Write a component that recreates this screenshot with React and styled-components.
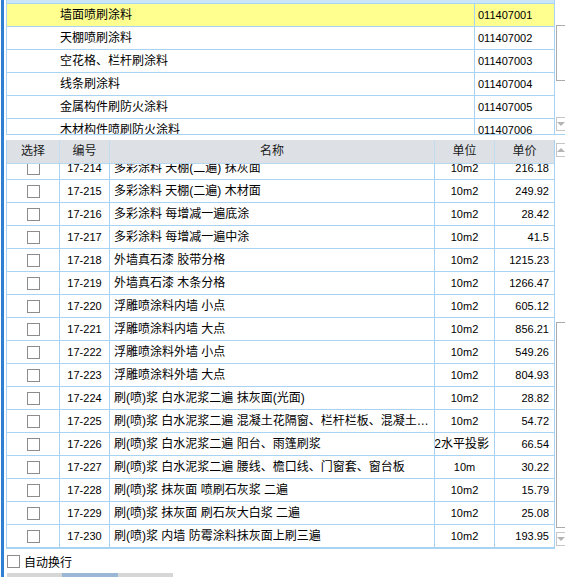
import React from "react";
import styled, { createGlobalStyle } from "styled-components";

const GlobalStyle = createGlobalStyle`
  html, body {
    margin: 0;
    padding: 0;
    background: #fff;
    overflow: hidden;
  }
`;

const LINE = "#a8d3f3";
const FONT = `"Liberation Sans", "Noto Sans CJK SC", sans-serif`;

const Frame = styled.div`
  display: flex;
  width: 565px;
  height: 577px;
  overflow: hidden;
  background: #fff;
  font-family: ${FONT};
  font-size: 12px;
  color: #000;
`;

const Edge = styled.div`
  flex: none;
  width: 3px;
  margin: 0 2px 0 1px;
  background: #2f80d3;
`;

const Main = styled.div`
  flex: 1;
  min-width: 0;
  display: flex;
  flex-direction: column;
`;

const Panel = styled.div`
  display: flex;
  flex: none;
  height: ${(p) => p.$h}px;
  margin-top: ${(p) => p.$top || 0}px;
`;

const Table = styled.div`
  flex: 1;
  min-width: 0;
  overflow: hidden;
  border-left: 1px solid ${LINE};
  border-right: 1px solid ${LINE};
  border-bottom: ${(p) => p.$bottom || 1}px solid ${LINE};
  display: flex;
  flex-direction: column;
`;

const TopBand = styled.div`
  flex: none;
  height: 3px;
  background: #cce6f9;
  border-bottom: 1px solid ${LINE};
`;

const ListRow = styled.div`
  flex: none;
  display: flex;
  height: 22px;
  line-height: 22px;
  border-bottom: 1px solid ${LINE};
  background: ${(p) => (p.$active ? "#ffff90" : "#fff")};
`;

const ListName = styled.div`
  width: 468px;
  flex: none;
  box-sizing: border-box;
  padding-left: 53px;
  border-right: 1px solid ${LINE};
  white-space: nowrap;
`;

const ListCode = styled.div`
  flex: 1;
  padding-left: 3px;
  font-size: 11px;
`;

const Grid = styled.div`
  flex: none;
  display: grid;
  grid-template-columns: 53px 50px 325px 60px 1fr;
  height: ${(p) => (p.$head ? 23 : 22)}px;
  line-height: ${(p) => (p.$head ? 23 : 22)}px;
  border-bottom: 1px solid ${(p) => (p.$head ? "#b9d7ee" : LINE)};
  background: ${(p) => (p.$head ? "#dde1e6" : "#fff")};
  margin-top: ${(p) => p.$shift || 0}px;
`;

const Cell = styled.div`
  box-sizing: border-box;
  min-width: 0;
  overflow: hidden;
  white-space: nowrap;
  border-right: ${(p) => (p.$last ? "none" : `1px solid ${LINE}`)};
  display: flex;
  align-items: center;
  justify-content: ${(p) =>
    p.$align === "right" ? "flex-end" : p.$align === "left" ? "flex-start" : "center"};
  padding: ${(p) => (p.$align === "right" ? "0 5px 0 0" : p.$align === "left" ? "0 0 0 4px" : "0")};
  font-size: ${(p) => (p.$num ? 11 : 12)}px;
`;

const HeadCell = styled(Cell)`
  border-right-color: #c4dcef;
  color: #1a1a1a;
`;

const Ellipsis = styled.span`
  display: block;
  min-width: 0;
  overflow: hidden;
  text-overflow: ellipsis;
  white-space: nowrap;
`;

const Box = styled.span`
  display: inline-block;
  flex: none;
  width: 13px;
  height: 13px;
  box-sizing: border-box;
  border: 1px solid #8c8c8c;
  background: #fff;
`;

const Body = styled.div`
  flex: 1;
  min-height: 0;
  overflow: hidden;
  display: flex;
  flex-direction: column;
`;

const ScrollTrack = styled.div`
  flex: none;
  width: 10px;
  display: flex;
  flex-direction: column;
  align-items: flex-end;
  background: #fff;
  border-bottom: 1px solid ${(p) => p.$line || "transparent"};
`;

const Thumb = styled.div`
  flex: none;
  width: 9px;
  height: ${(p) => p.$h}px;
  margin-top: ${(p) => p.$top || 0}px;
  box-sizing: border-box;
  border: 1px solid #ababab;
  border-right: none;
  background: #fff;
`;

const Arrow = styled.div`
  flex: none;
  width: 9px;
  height: 14px;
  box-sizing: border-box;
  border: 1px solid #c6c6c6;
  border-right: none;
  margin-top: ${(p) => p.$top || 0}px;
  margin-bottom: ${(p) => p.$bottom || 0}px;
  display: flex;
  align-items: center;
  justify-content: center;
  &::after {
    content: "";
    width: 0;
    height: 0;
    border-left: 4px solid transparent;
    border-right: 4px solid transparent;
    ${(p) => (p.$up ? "border-bottom" : "border-top")}: 4px solid #b4b4b4;
  }
`;

const Spacer = styled.div`
  flex: 1;
`;

const Footer = styled.div`
  flex: none;
  display: flex;
  align-items: center;
  gap: 4px;
  height: 22px;
  padding: 1px 0 0 1px;
  font-family: "Noto Sans CJK SC", sans-serif;
  font-size: 12px;
`;

const HScroll = styled.div`
  flex: none;
  width: 166px;
  height: 17px;
  margin: 1px 0 0 1px;
  background: #d6d6d6;
  display: flex;
`;

const HThumb = styled.div`
  width: 56px;
  margin-left: 55px;
  background: #9ab7d5;
`;

const topItems = [
  ["墙面喷刷涂料", "011407001"],
  ["天棚喷刷涂料", "011407002"],
  ["空花格、栏杆刷涂料", "011407003"],
  ["线条刷涂料", "011407004"],
  ["金属构件刷防火涂料", "011407005"],
  ["木材构件喷刷防火涂料", "011407006"],
];

const rows = [
  ["17-214", "多彩涂料 天棚(二遍) 抹灰面", "10m2", "216.18"],
  ["17-215", "多彩涂料 天棚(二遍) 木材面", "10m2", "249.92"],
  ["17-216", "多彩涂料 每增减一遍底涂", "10m2", "28.42"],
  ["17-217", "多彩涂料 每增减一遍中涂", "10m2", "41.5"],
  ["17-218", "外墙真石漆 胶带分格", "10m2", "1215.23"],
  ["17-219", "外墙真石漆 木条分格", "10m2", "1266.47"],
  ["17-220", "浮雕喷涂料内墙 小点", "10m2", "605.12"],
  ["17-221", "浮雕喷涂料内墙 大点", "10m2", "856.21"],
  ["17-222", "浮雕喷涂料外墙 小点", "10m2", "549.26"],
  ["17-223", "浮雕喷涂料外墙 大点", "10m2", "804.93"],
  ["17-224", "刷(喷)浆 白水泥浆二遍 抹灰面(光面)", "10m2", "28.82"],
  ["17-225", "刷(喷)浆 白水泥浆二遍 混凝土花隔窗、栏杆栏板、混凝土栏杆", "10m2", "54.72"],
  ["17-226", "刷(喷)浆 白水泥浆二遍 阳台、雨篷刷浆", "10m2水平投影", "66.54"],
  ["17-227", "刷(喷)浆 白水泥浆二遍 腰线、檐口线、门窗套、窗台板", "10m", "30.22"],
  ["17-228", "刷(喷)浆 抹灰面 喷刷石灰浆 二遍", "10m2", "15.79"],
  ["17-229", "刷(喷)浆 抹灰面 刷石灰大白浆 二遍", "10m2", "25.08"],
  ["17-230", "刷(喷)浆 内墙 防霉涂料抹灰面上刷三遍", "10m2", "193.95"],
];

const hasCjk = (s) => /[^\x00-\x7f]/.test(s);

export default function App() {
  return (
    <Frame>
      <GlobalStyle />
      <Edge />
      <Main>
        <Panel $h={135}>
          <Table>
            <TopBand />
            {topItems.map(([name, code], i) => (
              <ListRow key={code} $active={i === 0}>
                <ListName>{name}</ListName>
                <ListCode>{code}</ListCode>
              </ListRow>
            ))}
          </Table>
          <ScrollTrack $line={LINE}>
            <Thumb $top={25} $h={56} />
            <Spacer />
            <Arrow $bottom={3} />
          </ScrollTrack>
        </Panel>

        <Panel $h={409} $top={5}>
          <Table $bottom={2}>
            <Grid $head>
              <HeadCell>选择</HeadCell>
              <HeadCell>编号</HeadCell>
              <HeadCell>名称</HeadCell>
              <HeadCell>单位</HeadCell>
              <HeadCell $last>单价</HeadCell>
            </Grid>
            <Body>
              {rows.map(([code, name, unit, price], i) => (
                <Grid key={code} $shift={i === 0 ? -7 : 0}>
                  <Cell>
                    <Box />
                  </Cell>
                  <Cell $num>{code}</Cell>
                  <Cell $align="left">
                    <Ellipsis>{name}</Ellipsis>
                  </Cell>
                  <Cell $num={!hasCjk(unit)} $align={hasCjk(unit) ? "right" : undefined}>
                    {unit}
                  </Cell>
                  <Cell $num $align="right" $last>
                    {price}
                  </Cell>
                </Grid>
              ))}
            </Body>
          </Table>
          <ScrollTrack>
            <Arrow $up $top={3} />
            <Spacer />
            <Thumb $h={206} />
            <Arrow $top={4} $bottom={2} />
          </ScrollTrack>
        </Panel>

        <Footer>
          <Box />
          自动换行
        </Footer>
        <HScroll>
          <HThumb />
        </HScroll>
      </Main>
    </Frame>
  );
}
